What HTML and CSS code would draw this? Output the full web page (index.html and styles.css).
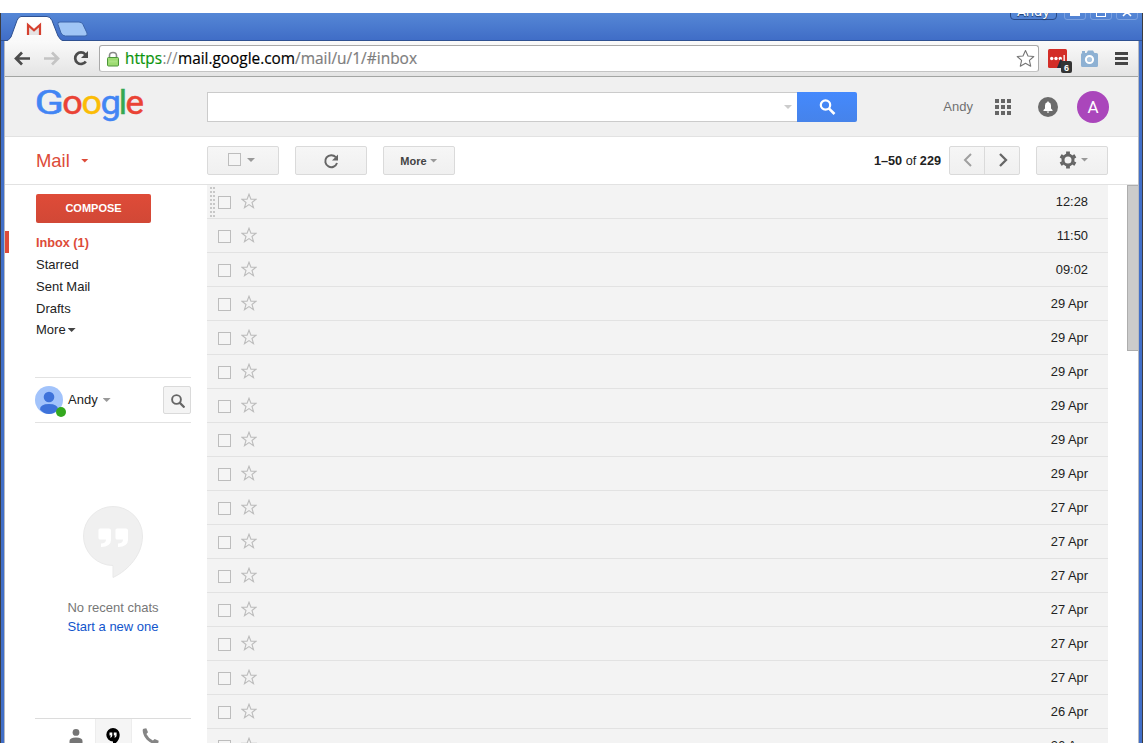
FILE: index.html
```html
<!DOCTYPE html>
<html lang="en">
<head>
<meta charset="utf-8">
<title>Inbox - Mail</title>
<link rel="stylesheet" href="styles.css">
</head>
<body>
<svg class="defs" width="0" height="0">
  <symbol id="star" viewBox="0 0 16 16"><path d="M8 1.200L9.900 6.100L15 6.300L11 9.500L12.500 14.600L8 11.600L3.500 14.600L5 9.500L1 6.300L6.100 6.100Z" fill="none" stroke="#bcbcbc" stroke-width="1.100"/></symbol>
  <linearGradient id="tabfill" x1="0" y1="0" x2="0" y2="1"><stop offset="0" stop-color="#fff"/><stop offset="1" stop-color="#f9f9f9"/></linearGradient>
</svg>
<div class="window">
  <div class="titlebar">
    <svg class="tabs" width="100" height="28" viewBox="0 0 100 28">
      <path d="M3 28.500Q8 28 10 24L16 7.500Q17.500 3.500 20 3.500H46Q49 3.500 51 7.500L57 23Q59 27.500 64 28.500Z" fill="url(#tabfill)" stroke="#2f5191"/>
      <path d="M59 9H78Q81 9 82 11.500L86 20Q87 23 84 23H64.500Q61.500 23 60 20L57 11.500Q56 9 59 9Z" fill="#a0c5f5" stroke="#3c65aa"/>
      <path d="M27 12V22H39V12L33 17Z" fill="#e6e3e3"/>
      <path d="M27 22V12L33 17.300L39 12V22" fill="none" stroke="#d5402f" stroke-width="2.200"/>
    </svg>
    <div class="winbuttons">
      <span class="winname">Andy</span>
      <span class="winbtn"><i class="min"></i></span>
      <span class="winbtn"><i class="max"></i></span>
      <span class="winbtn"><svg width="10" height="9" viewBox="0 0 10 9"><path d="M1 0L9 8M9 0L1 8" stroke="#fff" stroke-width="1.600"/></svg></span>
    </div>
  </div>
  <div class="client">
    <div class="navbar">
      <div class="navicons">
        <svg width="94" height="36" viewBox="0 0 94 36">
          <path d="M11 17.500H25M17 11.500L11 17.500L17 23.500" fill="none" stroke="#4c4c4c" stroke-width="2.700"/>
          <path d="M39 17.500H53M47 11.500L53 17.500L47 23.500" fill="none" stroke="#c4c4c4" stroke-width="2.700"/>
          <path d="M80.300 13.300A5.800 5.800 0 1 0 80.800 20.500" fill="none" stroke="#4c4c4c" stroke-width="2.700"/>
          <path d="M83 10V17H76Z" fill="#4c4c4c"/>
        </svg>
      </div>
      <div class="omnibox">
        <svg class="lock" width="12" height="16" viewBox="0 0 12 16"><path d="M2.500 8V4.500Q2.500 1.500 6 1.500T9.500 4.500V8" fill="none" stroke="#8a8a8a" stroke-width="1.600"/><rect x=".5" y="6.500" width="11" height="8.500" rx="1" fill="#9ddc72" stroke="#4d963a"/><path d="M2 10.500H10" stroke="#c2efa3" stroke-width="2" opacity=".4"/></svg>
        <svg class="url" width="296" height="24" viewBox="0 0 296 24">
          <text y="17" x="0" textLength="37" lengthAdjust="spacingAndGlyphs" fill="#0a930a" stroke="#0a930a">https</text>
          <text y="17" x="37.500" textLength="15" lengthAdjust="spacingAndGlyphs" fill="#858585">://</text>
          <text y="17" x="53" textLength="117" lengthAdjust="spacingAndGlyphs" fill="#000" stroke="#000">mail.google.com</text>
          <text y="17" x="170" textLength="122" lengthAdjust="spacingAndGlyphs" fill="#7d7d7d" stroke="#7d7d7d">/mail/u/1/#inbox</text>
        </svg>
        <svg class="bookmark" width="19" height="19" viewBox="0 0 19 19"><path d="M9.500 1.500L12 7L17.800 7.500L13.400 11.400L14.700 17.200L9.500 14.200L4.300 17.200L5.600 11.400L1.200 7.500L7 7Z" fill="#fff" stroke="#757575" stroke-width="1.100" stroke-linejoin="round"/></svg>
      </div>
      <svg class="extensions" width="99" height="36" viewBox="0 0 99 36">
        <rect x="9" y="8" width="19" height="19" rx="1.500" fill="#d32d27"/>
        <g fill="#fff"><circle cx="12.700" cy="17.500" r="1.700"/><circle cx="17" cy="17.500" r="1.700"/><circle cx="21.300" cy="17.500" r="1.700"/><rect x="24.500" y="14" width="1.300" height="7"/></g>
        <path d="M18 27L21.500 18L25 22V27Z" fill="#252d38"/>
        <rect x="22" y="20" width="11" height="12" rx="2" fill="#343434"/>
        <text x="27.500" y="29.500" class="badge">6</text>
        <path d="M43.500 12H47.500L49 9.500H54L55.500 12H57.500Q59 12 59 13.500V24.500Q59 26 57.500 26H43.500Q42 26 42 24.500V13.500Q42 12 43.500 12Z" fill="#8eb1d3"/>
        <rect x="43" y="10" width="3" height="2" fill="#8eb1d3"/>
        <circle cx="50.500" cy="18.500" r="3.600" fill="#a9c5e0" stroke="#fff" stroke-width="2"/>
        <path d="M76 12.500H89M76 17.500H89M76 22.500H89" stroke="#454545" stroke-width="3"/>
      </svg>
    </div>
    <header class="header">
      <svg class="logo" width="110" height="44" viewBox="0 0 110 44">
        <text x="-1.500" y="31" textLength="29.500" lengthAdjust="spacingAndGlyphs" fill="#4285f4" stroke="#4285f4">G</text>
        <text x="26.200" y="31" textLength="20.500" lengthAdjust="spacingAndGlyphs" fill="#ea4335" stroke="#ea4335">o</text>
        <text x="45.400" y="31" textLength="20.500" lengthAdjust="spacingAndGlyphs" fill="#fbbc05" stroke="#fbbc05">o</text>
        <text x="64.500" y="31" textLength="20.500" lengthAdjust="spacingAndGlyphs" fill="#4285f4" stroke="#4285f4">g</text>
        <text x="82.800" y="31" textLength="8.300" lengthAdjust="spacingAndGlyphs" fill="#34a853" stroke="#34a853">l</text>
        <text x="89.500" y="31" textLength="18.500" lengthAdjust="spacingAndGlyphs" fill="#ea4335" stroke="#ea4335">e</text>
      </svg>
      <div class="search"><i class="caret light"></i></div>
      <div class="searchbtn"><svg width="18" height="18" viewBox="0 0 18 18"><circle cx="7.500" cy="7" r="4.700" fill="none" stroke="#fff" stroke-width="2.200"/><path d="M10.800 10.300L16.500 16" stroke="#fff" stroke-width="2.600"/></svg></div>
      <span class="user">Andy</span>
      <svg class="apps" width="16" height="16" viewBox="0 0 16 16"><path d="M0 2H16M0 8H16M0 14H16" stroke="#666" stroke-width="4" stroke-dasharray="4 2"/></svg>
      <svg class="bell" width="20" height="20" viewBox="0 0 20 20"><circle cx="10" cy="10" r="10" fill="#6b6b6b"/><path d="M5.500 14V13L7 11.500V8.500Q7 5.700 9.300 5.300V4.500H10.700V5.300Q13 5.700 13 8.500V11.500L14.500 13V14ZM8.700 14.500H11.300Q11 15.800 10 15.800T8.700 14.500Z" fill="#fff"/></svg>
      <div class="avatar">A</div>
    </header>
    <div class="actions">
      <div class="mailmenu">Mail<i class="caret red"></i></div>
      <div class="btn select"><i class="box"></i><i class="caret"></i></div>
      <div class="btn"><svg width="16" height="16" viewBox="0 0 16 16"><path d="M12.800 4.200A6 6 0 1 0 14 10" fill="none" stroke="#666" stroke-width="2"/><path d="M15 1.500V7.500H9Z" fill="#666"/></svg></div>
      <div class="btn more">More<i class="caret"></i></div>
      <div class="count"><b>1–50</b> of <b>229</b></div>
      <div class="pager">
        <span><svg width="10" height="14" viewBox="0 0 10 14"><path d="M8 1L2 7L8 13" fill="none" stroke="#a0a0a0" stroke-width="2"/></svg></span>
        <span><svg width="10" height="14" viewBox="0 0 10 14"><path d="M2 1L8 7L2 13" fill="none" stroke="#666" stroke-width="2.300"/></svg></span>
      </div>
      <div class="btn gear"><svg width="18" height="18" viewBox="0 0 18 18"><circle cx="9" cy="9" r="5" fill="none" stroke="#666" stroke-width="3"/><path d="M9 .5V3M9 15V17.500M1.600 4.800L3.800 6M14.200 12L16.400 13.200M1.600 13.200L3.800 12M14.200 6L16.400 4.800" stroke="#666" stroke-width="3.800"/></svg><i class="caret"></i></div>
    </div>
    <div class="body">
      <aside class="sidebar">
        <div class="compose">COMPOSE</div>
        <nav class="labels">
          <div class="active">Inbox (1)</div>
          <div>Starred</div>
          <div>Sent Mail</div>
          <div>Drafts</div>
          <div class="morelabels">More<i class="caret dark"></i></div>
        </nav>
        <div class="profile">
          <svg width="32" height="32" viewBox="0 0 32 32"><circle cx="14" cy="14" r="14" fill="#a2c3fb"/><circle cx="14" cy="11" r="5.300" fill="#3e72da"/><path d="M5 23.500Q5 18 14 18T23 23.500Q19 28 14 28T5 23.500Z" fill="#3e72da"/><circle cx="26" cy="26" r="5" fill="#34a81e"/></svg>
          <span>Andy</span><i class="caret"></i>
          <div class="findbtn"><svg width="14" height="14" viewBox="0 0 14 14"><circle cx="5.500" cy="5.500" r="4.400" fill="none" stroke="#666" stroke-width="1.900"/><path d="M8.600 8.600L13.500 13.500" stroke="#666" stroke-width="2.200"/></svg></div>
        </div>
        <div class="chat">
          <svg width="60" height="73" viewBox="0 0 60 73"><path d="M30 .5A29.500 29.500 0 1 0 30 59.500V71.500C46 64 59.500 48 59.500 30A29.500 29.500 0 0 0 30 .5Z" fill="#f0f0f0" stroke="#e9e9e9"/><path d="M17 22.500H26Q28 22.500 28 24.500V34Q28 40.500 18 41V37.500Q23 37.500 23 33.500H17Q15.500 33.500 15.500 32V24Q15.500 22.500 17 22.500ZM34 22.500H43Q45 22.500 45 24.500V34Q45 40.500 35 41V37.500Q40 37.500 40 33.500H34Q32.500 33.500 32.500 32V24Q32.500 22.500 34 22.500Z" fill="#fff"/></svg>
          <p class="none">No recent chats</p>
          <p class="start">Start a new one</p>
        </div>
        <div class="chattabs">
          <div><svg width="14" height="16" viewBox="0 0 14 16"><circle cx="7" cy="3.400" r="3.400" fill="#757575"/><path d="M.5 16V12Q.5 8.500 7 8.500T13.500 12V16Z" fill="#757575"/></svg></div>
          <div class="current"><svg width="14" height="17" viewBox="0 0 14 17"><path d="M7 0A6.700 6.700 0 1 0 7 13.400V17C11 15 13.700 11 13.700 6.700A6.700 6.700 0 0 0 7 0Z" fill="#000"/><path d="M3.500 4.500H6.300V7.500Q6.300 9.500 4.200 9.700V8.500Q5 8.300 5 7.500H3.500ZM7.800 4.500H10.600V7.500Q10.600 9.500 8.500 9.700V8.500Q9.300 8.300 9.300 7.500H7.800Z" fill="#fff"/></svg></div>
          <div><svg width="17" height="17" viewBox="0 0 17 17"><path d="M4.300 .3L1.600 .8Q.6 1.100 .7 2.500C1 9.500 7.500 16 14.500 16.300Q15.900 16.400 16.200 15.400L16.700 12.700L12.700 11L10.900 12.600Q6.500 10.500 4.400 6.100L6 4.300Z" fill="#858585"/></svg></div>
        </div>
      </aside>
      <main class="list">
        <div class="row"><i class="grip"></i><i class="box"></i><svg class="star"><use href="#star"/></svg><span>12:28</span></div>
        <div class="row"><i class="box"></i><svg class="star"><use href="#star"/></svg><span>11:50</span></div>
        <div class="row"><i class="box"></i><svg class="star"><use href="#star"/></svg><span>09:02</span></div>
        <div class="row"><i class="box"></i><svg class="star"><use href="#star"/></svg><span>29 Apr</span></div>
        <div class="row"><i class="box"></i><svg class="star"><use href="#star"/></svg><span>29 Apr</span></div>
        <div class="row"><i class="box"></i><svg class="star"><use href="#star"/></svg><span>29 Apr</span></div>
        <div class="row"><i class="box"></i><svg class="star"><use href="#star"/></svg><span>29 Apr</span></div>
        <div class="row"><i class="box"></i><svg class="star"><use href="#star"/></svg><span>29 Apr</span></div>
        <div class="row"><i class="box"></i><svg class="star"><use href="#star"/></svg><span>29 Apr</span></div>
        <div class="row"><i class="box"></i><svg class="star"><use href="#star"/></svg><span>27 Apr</span></div>
        <div class="row"><i class="box"></i><svg class="star"><use href="#star"/></svg><span>27 Apr</span></div>
        <div class="row"><i class="box"></i><svg class="star"><use href="#star"/></svg><span>27 Apr</span></div>
        <div class="row"><i class="box"></i><svg class="star"><use href="#star"/></svg><span>27 Apr</span></div>
        <div class="row"><i class="box"></i><svg class="star"><use href="#star"/></svg><span>27 Apr</span></div>
        <div class="row"><i class="box"></i><svg class="star"><use href="#star"/></svg><span>27 Apr</span></div>
        <div class="row"><i class="box"></i><svg class="star"><use href="#star"/></svg><span>26 Apr</span></div>
        <div class="row"><i class="box"></i><svg class="star"><use href="#star"/></svg><span>26 Apr</span></div>
      </main>
      <div class="scrollbar"></div>
    </div>
  </div>
</div>
</body>
</html>
```
FILE: styles.css
```css
* { box-sizing: border-box; }
body { margin: 0; padding-top: 13px; height: 756px; overflow: hidden; background: #fff; font: 13px/16px "Liberation Sans", Arial, sans-serif; color: #222; }
svg { display: block; flex: none; }
.defs { position: absolute; }
.window { height: 730px; overflow: hidden; background: #416fc8; border: solid #3c3c3f; border-width: 0 1px; display: flex; flex-direction: column; }

/* window frame */
.titlebar { height: 28px; flex: none; background: linear-gradient(#2f5191, #2f5191) bottom / 100% 1px no-repeat, linear-gradient(#5587d6, #3f6cc6); display: flex; justify-content: space-between; align-items: flex-start; padding: 0 4px 0 0; overflow: hidden; }
.winbuttons { display: flex; gap: 4px; height: 8px; }
.winname { width: 47px; height: 20px; margin: -13px 3px 0 0; border: 1px solid #284987; border-radius: 4px; color: #fff; font: 13px/22px "DejaVu Sans", sans-serif; text-align: center; text-shadow: 0 1px 1px #19325f; }
.winbtn { width: 22px; height: 20px; margin-top: -13px; border: 1px solid #7ba1e1; border-radius: 3px; display: flex; justify-content: center; padding-top: 7px; }
.min { width: 10px; height: 3px; background: #fff; margin-top: 5px; }
.max { width: 10px; height: 9px; border: 1px solid #fff; }
.client { flex: 1; min-height: 0; margin: 0 3px; border: solid #b5b9c2; border-width: 0 1px; background: #fff; display: flex; flex-direction: column; }
.navbar { height: 36px; flex: none; display: flex; align-items: center; background: linear-gradient(#fafafa, #e4e4e4); border-bottom: 1px solid #a3a5a3; }
.omnibox { flex: 1; height: 27px; border: 1px solid #a9a9a9; border-bottom-color: #c4c4c4; border-radius: 3px; background: #fff; display: flex; align-items: center; padding: 0 3px 0 7px; }
.url { margin-left: 6px; overflow: visible; font: 17px "Open Sans", sans-serif; stroke-width: .2px; }
.bookmark { margin-left: auto; }
.badge { font: bold 9px "Liberation Sans", sans-serif; fill: #fff; text-anchor: middle; }

/* account header */
.header { height: 60px; flex: none; background: #f0f0f0; border-bottom: 1px solid #e2e2e2; display: flex; align-items: center; padding-right: 29px; }
.logo { margin: 6px 61px 0 31px; font: 400 34px Roboto, sans-serif; stroke-width: .5px; align-self: flex-start; overflow: visible; }
.search { width: 590px; height: 30px; margin-top: 1px; border: 1px solid #cbcbcb; border-right: 0; background: #fff; display: flex; align-items: center; justify-content: flex-end; padding-right: 5px; }
.searchbtn { width: 60px; height: 30px; margin-top: 1px; border-radius: 0 2px 2px 0; background: linear-gradient(#4489fd, #4683ea); display: flex; align-items: center; justify-content: center; }
.user { margin-left: auto; margin-right: 22px; color: #707070; }
.apps { margin-right: 27px; }
.bell { margin-right: 19px; }
.avatar { width: 32px; height: 32px; border-radius: 50%; background: #aa46bb; color: #fff; font: 17px/33px Roboto, sans-serif; text-align: center; }

/* list toolbar */
.caret { display: block; width: 8px; height: 4px; background: #999; clip-path: polygon(0 0, 100% 0, 50% 100%); }
.caret.light { background: #ccc; }
.caret.dark { background: #444; }
.caret.red { background: #dd4b39; margin-left: 11px; }
.actions { height: 48px; flex: none; border-bottom: 1px solid #e2e2e2; display: flex; align-items: center; padding: 0 30px 0 31px; }
.mailmenu { width: 171px; display: flex; align-items: center; color: #dd4b39; font-size: 18.400px; line-height: 20px; }
.btn { width: 72px; height: 29px; margin-right: 16px; border: 1px solid #dadada; border-radius: 2px; background: linear-gradient(#f6f6f6, #f0f0f0); display: flex; align-items: center; justify-content: center; gap: 6px; }
.select { padding: 0 3px 2px 0; }
.select .caret { margin-top: 1px; }
.box { display: block; width: 13px; height: 13px; border: 1px solid #bdbdbd; background: #f5f5f5; }
.more { gap: 3px; font-weight: bold; font-size: 11px; color: #444; }
.count { margin-left: auto; font-size: 12.700px; }
.pager { width: 71px; height: 29px; margin: 0 16px 0 8px; border: 1px solid #dadada; border-radius: 2px; background: linear-gradient(#f6f6f6, #f0f0f0); display: flex; }
.pager span { flex: 1; display: flex; align-items: center; justify-content: center; }
.pager span { padding: 0 0 2px 1px; }
.pager span + span { border-left: 1px solid #dadada; }
.gear { margin-right: 0; gap: 4px; padding: 0 0 2px 3px; }

/* sidebar */
.body { flex: 1; min-height: 0; display: flex; overflow: hidden; }
.sidebar { width: 202px; flex: none; padding: 9px 16px 0 30px; }
.compose { width: 115px; height: 29px; margin-left: 1px; border-radius: 2px; background: linear-gradient(#df4b38, #d14836); color: #fff; font: bold 11px/29px "Liberation Sans", sans-serif; text-align: center; }
.labels { margin: 8px 0 0 -30px; line-height: 24px; }
.labels div { height: 22px; padding-left: 31px; }
.labels .active { border-left: 4px solid #dd4b39; padding-left: 27px; color: #dd4b39; font-weight: bold; font-size: 12.700px; }
.labels .morelabels { display: flex; align-items: center; gap: 2px; margin-top: -1px; padding-top: 2px; }
.profile { height: 46px; margin-top: 37px; border: solid #e2e2e2; border-width: 1px 0; display: flex; align-items: center; }
.profile > svg { margin-top: 4px; }
.profile span { margin: 0 5px 0 1px; }
.findbtn { width: 28px; height: 28px; margin-left: auto; border: 1px solid #dadada; border-radius: 2px; background: #f4f4f4; display: flex; align-items: center; justify-content: center; padding-left: 1px; padding-top: 1px; }
.chat { height: 295px; padding-top: 83px; display: flex; flex-direction: column; align-items: center; }
.chat p { margin: 0; line-height: 19px; }
.none { color: #777; }
.chat svg { margin-bottom: 19px; }
.start { color: #15c; }
.chattabs { height: 38px; border-top: 1px solid #dcdcdc; display: flex; padding-left: 23px; }
.chattabs div { width: 37px; display: flex; justify-content: center; padding: 10px 1px 0 0; }
.chattabs div.current { background: #f5f5f5; border: solid #ededed; border-width: 0 1px; padding: 9px 2px 0 0; }
.chattabs div:last-child { padding-top: 9px; }

/* messages */
.list { width: 901px; flex: none; }
.row { position: relative; height: 34px; background: #f3f3f3; border-bottom: 1px solid #e2e2e2; display: flex; align-items: center; padding: 0 20px 0 11px; }
.row .box { margin-top: 2px; background: #f5f5f5; }
.star { width: 16px; height: 16px; margin-left: 10px; margin-bottom: 1px; }
.row span { margin-left: auto; font-size: 12.900px; }
.grip { position: absolute; left: 3px; top: 2px; width: 5px; height: 30px; background: repeating-linear-gradient(#c8c8c8 0 2px, transparent 2px 4px); clip-path: polygon(0 0, 2px 0, 2px 100%, 3px 100%, 3px 0, 5px 0, 5px 100%, 0 100%); }
.scrollbar { width: 11px; height: 166px; margin-left: auto; background: #cbcbcb; border: solid #adadad; border-width: 1px 0 1px 1px; }
```
